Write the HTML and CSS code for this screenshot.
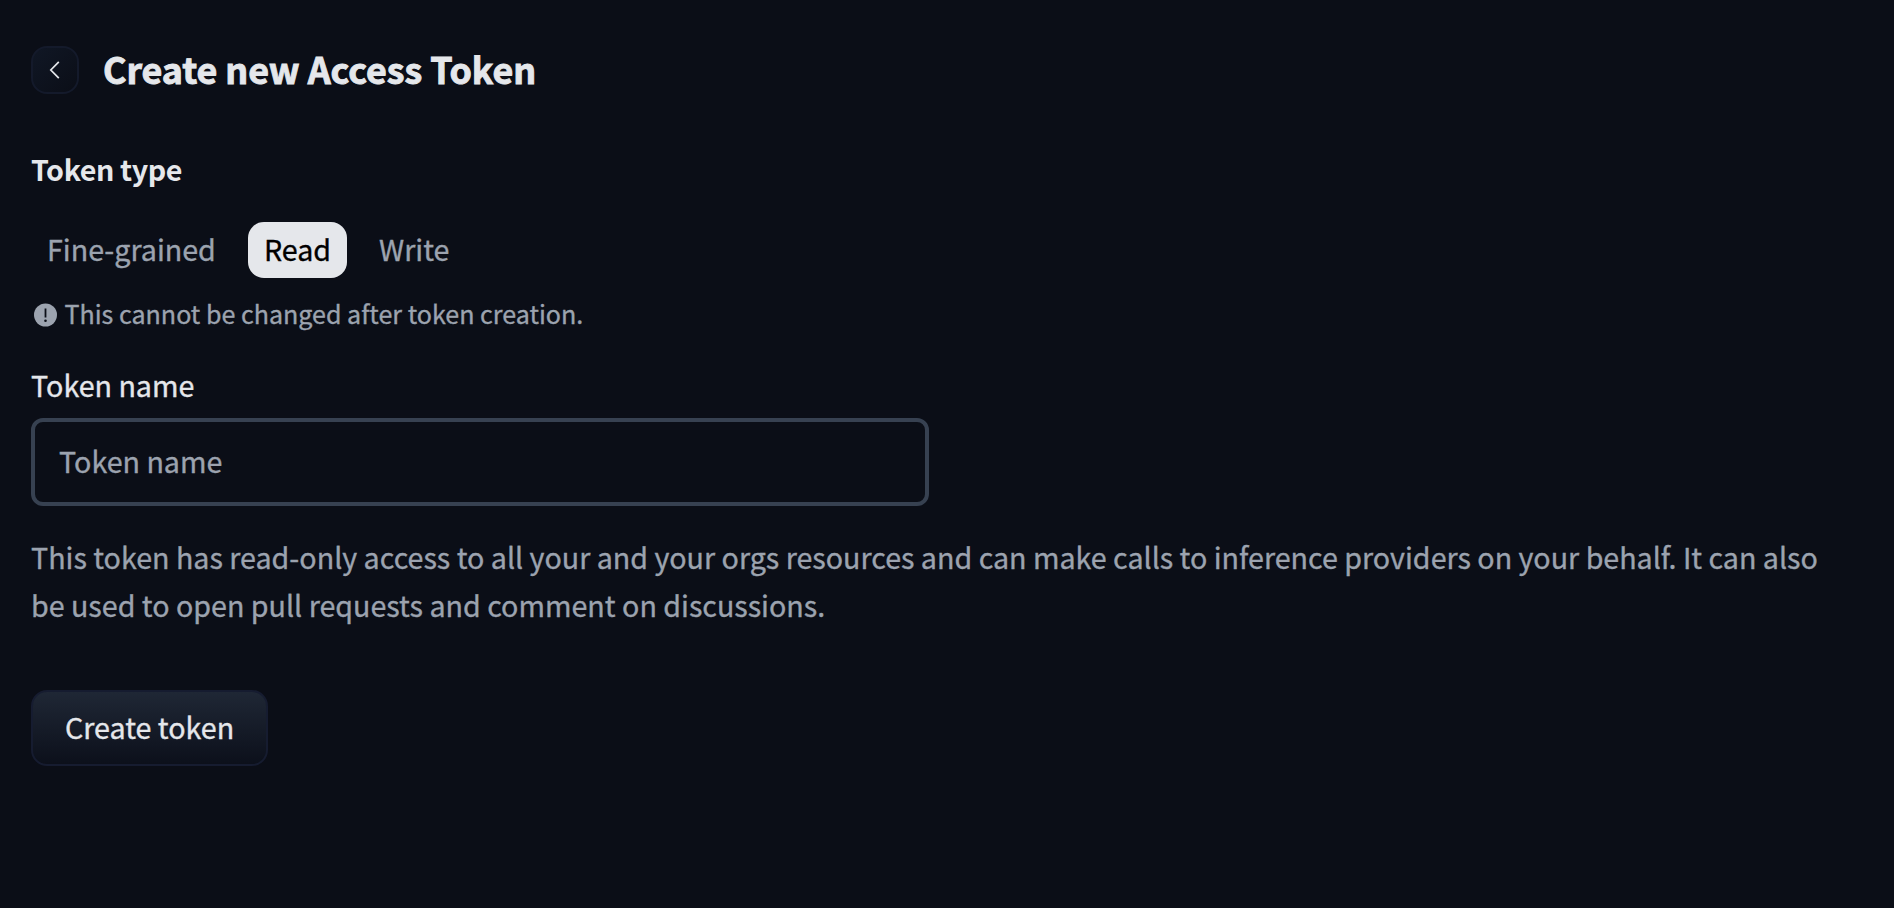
FILE: index.html
```html
<!DOCTYPE html>
<html lang="en">
<head>
<meta charset="utf-8">
<title>Create new Access Token</title>
<link rel="stylesheet" href="styles.css">
</head>
<body>
<main class="page">
  <header class="header">
    <a class="back" aria-label="Back">
      <svg width="12" height="20" viewBox="0 0 12 20" fill="none" stroke="#e5e7eb" stroke-width="1.7"><path d="M9.8 1.8 1.8 10l8 8.2"/></svg>
    </a>
    <h1 class="title">Create new Access Token</h1>
  </header>
  <h2 class="section-title">Token type</h2>
  <div class="tabs">
    <button class="tab">Fine-grained</button>
    <button class="tab tab-active">Read</button>
    <button class="tab">Write</button>
  </div>
  <p class="note">
    <svg class="note-icon" width="23" height="24" viewBox="0 0 23 24"><circle cx="11.5" cy="12" r="11.5" fill="#9ca3af"/><path d="M10.6 5.5h1.8v9h-1.8z" fill="#0b0e17"/><circle cx="11.5" cy="17.7" r="1.3" fill="#0b0e17"/></svg>
    <span>This cannot be changed after token creation.</span>
  </p>
  <label class="label" for="name">Token name</label>
  <input class="input" id="name" type="text" placeholder="Token name">
  <p class="description">This token has read-only access to all your and your orgs resources and can make calls to inference providers on your behalf. It can also be used to open pull requests and comment on discussions.</p>
  <button class="submit">Create token</button>
</main>
</body>
</html>
```
FILE: styles.css
```css
* { box-sizing: border-box; margin: 0; padding: 0; }
body {
  background: #0b0e17;
  color: #e5e7eb;
  font-family: "Noto Sans CJK SC", "Noto Sans", sans-serif;
  font-size: 28.65px;
  line-height: 48px;
  -webkit-text-stroke: 0.35px currentColor;
}
button, input { font: inherit; border: 0; -webkit-text-stroke: inherit; }
.page {
  display: flex;
  flex-direction: column;
  align-items: flex-start;
  min-height: 908px;
  padding: 46px 31px 0;
}
.header { display: flex; align-items: center; gap: 24px; height: 48px; }
.back {
  display: flex;
  align-items: center;
  justify-content: center;
  width: 48px;
  height: 48px;
  border: 2px solid #141a2b;
  border-radius: 16px;
  background: linear-gradient(135deg, #101725, #0b0e17);
}
.title {
  padding-bottom: 3px;
  font-size: 35.8px;
  font-weight: 700;
  line-height: 45px;
  letter-spacing: -0.06px;
  white-space: nowrap;
  -webkit-text-stroke-width: 0.9px;
}
.section-title { margin-top: 51px; font-size: 28.65px; font-weight: 700; letter-spacing: -0.4px; -webkit-text-stroke-width: 0; }
.tabs { display: flex; gap: 16px; margin-top: 29px; }
.tab {
  height: 56px;
  padding: 0 16px 3px;
  border-radius: 16px;
  background: none;
  color: #9ca3af;
  line-height: 53px;
}
.tab-active { background: #e5e7eb; color: #000; }
.note {
  display: flex;
  align-items: center;
  gap: 7.5px;
  height: 40px;
  margin: 17px 0 0 3px;
  color: #9ca3af;
  font-size: 25.07px;
  line-height: 40px;
}
.note span { padding-bottom: 4px; }
.label { margin-top: 26px; }
.input {
  width: 898px;
  height: 88px;
  margin-top: 9px;
  padding: 0 24px 3px;
  border: 4px solid #374151;
  border-radius: 12px;
  background: transparent;
  color: #e5e7eb;
}
.input::placeholder { color: #9ca3af; opacity: 1; -webkit-text-stroke: 0.35px #9ca3af; }
.description { width: 1800px; margin-top: 27px; color: #9ca3af; }
.submit {
  height: 76px;
  margin-top: 61px;
  padding: 0 32px 3px;
  border: 2px solid #161c30;
  border-radius: 16px;
  background: linear-gradient(#1f2735, #0c101b);
  color: #e5e7eb;
}
```
